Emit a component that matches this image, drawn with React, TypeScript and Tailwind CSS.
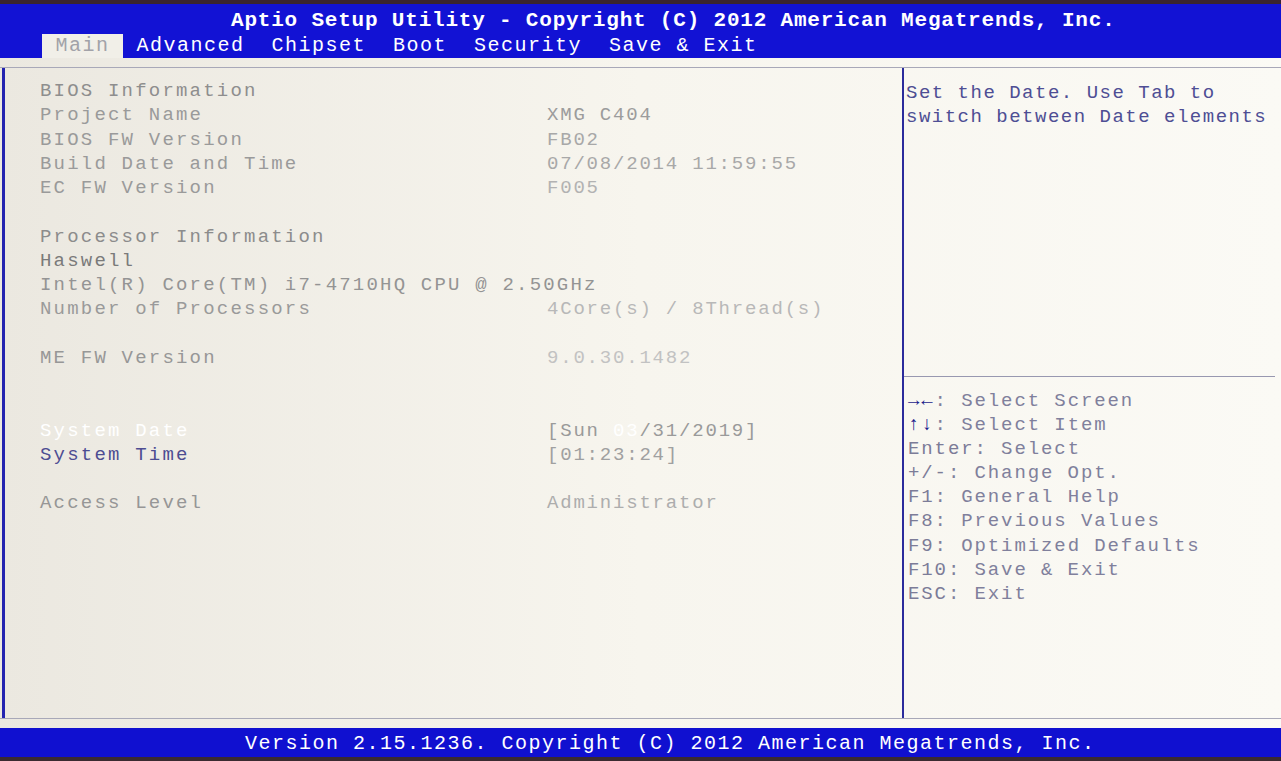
import React from 'react';

type Row = {
  label?: string;
  value?: React.ReactNode;
  labelColor?: string;
  valueColor?: string;
  wide?: boolean;
};

const rows: Row[] = [
  { label: 'BIOS Information', labelColor: 'text-[#8e8e8e]' },
  { label: 'Project Name', value: 'XMG C404', labelColor: 'text-[#9a9a9a]', valueColor: 'text-[#9c9c9c]' },
  { label: 'BIOS FW Version', value: 'FB02', labelColor: 'text-[#9a9a9a]', valueColor: 'text-[#a8a8a8]' },
  { label: 'Build Date and Time', value: '07/08/2014 11:59:55', labelColor: 'text-[#9a9a9a]', valueColor: 'text-[#a8a8a8]' },
  { label: 'EC FW Version', value: 'F005', labelColor: 'text-[#9a9a9a]', valueColor: 'text-[#b2b2b2]' },
  {},
  { label: 'Processor Information', labelColor: 'text-[#8c8c8c]' },
  { label: 'Haswell', labelColor: 'text-[#7a7a7a]' },
  { label: 'Intel(R) Core(TM) i7-4710HQ CPU @ 2.50GHz', labelColor: 'text-[#949494]', wide: true },
  { label: 'Number of Processors', value: '4Core(s) / 8Thread(s)', labelColor: 'text-[#9a9a9a]', valueColor: 'text-[#b8b8b8]' },
  {},
  { label: 'ME FW Version', value: '9.0.30.1482', labelColor: 'text-[#979797]', valueColor: 'text-[#c2c2c2]' },
  {},
  {},
  {
    label: 'System Date',
    value: (
      <>
        [Sun <span className="text-white">03</span>/31/2019]
      </>
    ),
    labelColor: 'text-white',
    valueColor: 'text-[#9a9a9a]',
  },
  { label: 'System Time', value: '[01:23:24]', labelColor: 'text-[#4d4d92]', valueColor: 'text-[#a0a0a0]' },
  {},
  { label: 'Access Level', value: 'Administrator', labelColor: 'text-[#969696]', valueColor: 'text-[#adadad]' },
];

const help: { key: string; text: string; keyColor: string }[] = [
  { key: '→←', text: ': Select Screen', keyColor: 'text-[#1c1c8c] font-bold' },
  { key: '↑↓', text: ': Select Item', keyColor: 'text-[#1c1c8c] font-bold' },
  { key: 'Enter', text: ': Select', keyColor: 'text-[#7c7c98]' },
  { key: '+/-', text: ': Change Opt.', keyColor: 'text-[#7c7c98]' },
  { key: 'F1', text: ': General Help', keyColor: 'text-[#7c7c98]' },
  { key: 'F8', text: ': Previous Values', keyColor: 'text-[#7c7c98]' },
  { key: 'F9', text: ': Optimized Defaults', keyColor: 'text-[#7c7c98]' },
  { key: 'F10', text: ': Save & Exit', keyColor: 'text-[#7c7c98]' },
  { key: 'ESC', text: ': Exit', keyColor: 'text-[#7c7c98]' },
];

export default function App() {
  return (
    <div className="w-[1281px] h-[761px] overflow-hidden flex flex-col bg-gradient-to-r from-[#ebe8e0] via-[#f7f5ee] to-[#fbfaf5] font-['Liberation_Mono',monospace]">
      {/* bord de l'écran */}
      <div className="h-[4px] bg-[#3a2430]" />

      {/* en-tête bleu */}
      <div className="h-[54px] bg-[#1212d4] flex flex-col">
        <div className="h-[30px] pl-[231px] flex items-center font-bold text-white text-[21px] tracking-[0.8px] whitespace-pre leading-none pt-[3px]">
          Aptio Setup Utility - Copyright (C) 2012 American Megatrends, Inc.
        </div>
        <div className="flex-1 flex pl-[42px] whitespace-pre leading-none text-[20px] tracking-[1.5px]">
          <div className="bg-[#f1efe8] text-[#a2a2a8] flex items-center">{' Main '}</div>
          <div className="flex items-center text-white">{' Advanced  Chipset  Boot  Security  Save & Exit'}</div>
        </div>
      </div>

      <div className="h-[9px]" />

      {/* panneaux */}
      <div className="h-[652px] flex border-t border-b border-[#a8a8b8]">
        <div className="w-[900px] ml-[2px] border-l-[3px] border-[#2323b0] pl-[35px] pt-[11px] text-[19px] leading-[24.25px]">
          <div className="grid grid-cols-[507px_1fr]">
            {rows.map((r, i) =>
              r.wide ? (
                <div key={i} className={`col-span-2 whitespace-pre tracking-[2.2px] ${r.labelColor}`}>
                  {r.label}
                </div>
              ) : (
                <React.Fragment key={i}>
                  <div className={`whitespace-pre tracking-[2.2px] h-[24.25px] ${r.labelColor ?? ''}`}>{r.label ?? ''}</div>
                  <div className={`whitespace-pre tracking-[1.8px] h-[24.25px] ${r.valueColor ?? ''}`}>{r.value ?? ''}</div>
                </React.Fragment>
              )
            )}
          </div>
        </div>

        <div className="flex-1 flex flex-col border-l-2 border-[#2b2b9c] mr-[6px] text-[19px] leading-[24.1px] overflow-hidden">
          <div className="h-[309px] pl-[2px] pt-[13px] text-[#4e4e94] whitespace-pre tracking-[1.5px] border-b border-[#9898b0]">
            <div>Set the Date. Use Tab to</div>
            <div>switch between Date elements</div>
          </div>
          <div className="pl-[4px] pt-[12px] whitespace-pre tracking-[1.9px]">
            {help.map((h) => (
              <div key={h.key}>
                <span className={h.keyColor}>{h.key}</span>
                <span className="text-[#80809c]">{h.text}</span>
              </div>
            ))}
          </div>
        </div>
      </div>

      <div className="h-[9px]" />

      {/* pied de page */}
      <div className="h-[29px] bg-[#1010d0] flex items-center pl-[245px] text-white text-[20px] tracking-[1.5px] whitespace-pre leading-none pt-[2px]">
        Version 2.15.1236. Copyright (C) 2012 American Megatrends, Inc.
      </div>
      <div className="flex-1 bg-[#3a2a30]" />
    </div>
  );
}
